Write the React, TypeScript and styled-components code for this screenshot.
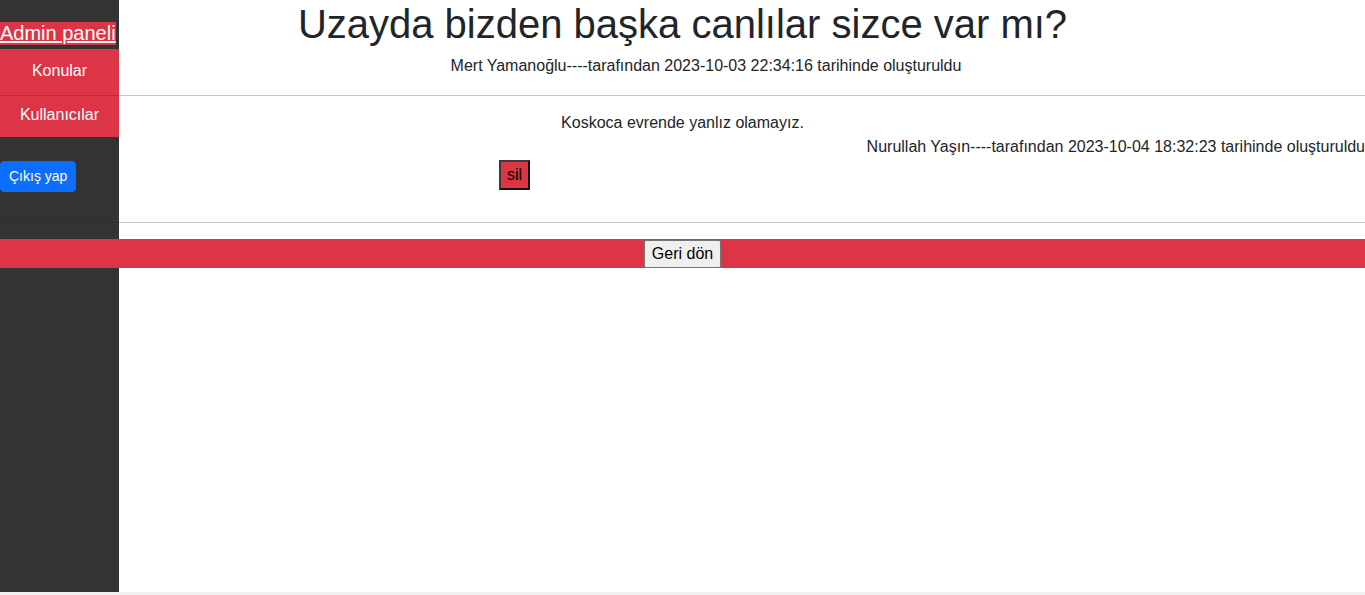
import React from 'react'
import styled, { createGlobalStyle } from 'styled-components';

const GlobalStyle = createGlobalStyle`
  html, body {
    margin: 0;
    padding: 0;
    background: #f0f0f0;
  }
  body {
    font-family: "Liberation Sans", Arial, sans-serif;
    font-size: 16px;
    line-height: 1.5;
    color: #212529;
  }
`;

const Sayfa = styled.div`
  display: grid;
  grid-template-columns: 119px 1fr;
  grid-template-rows: 1fr;
  height: 592px;
  background: #ffffff;
`;

const Kenar = styled.aside`
  grid-column: 1;
  grid-row: 1;
  background: #333333;
  display: flex;
  flex-direction: column;
  align-items: flex-start;
  padding-top: 22px;
`;

const PanelBaslik = styled.a`
  display: block;
  font-size: 20px;
  line-height: 23px;
  color: #ffffff;
  background: #dc3545;
  text-decoration: underline;
  margin-bottom: 4px;
  cursor: pointer;
`;

const Menu = styled.nav`
  display: flex;
  flex-direction: column;
  width: 100%;
`;

const MenuLink = styled.a`
  display: block;
  height: 44px;
  line-height: 44px;
  text-align: center;
  background: #dc3545;
  color: #ffffff;
  text-decoration: none;
  cursor: pointer;
`;

const CikisButon = styled.button`
  margin-top: 24px;
  font-family: inherit;
  font-size: 14px;
  line-height: 21px;
  padding: 4px 8px;
  color: #ffffff;
  background: #0d6efd;
  border: 1px solid #0d6efd;
  border-radius: 4px;
  cursor: pointer;
`;

const Icerik = styled.main`
  grid-column: 1 / -1;
  grid-row: 1;
  display: flex;
  flex-direction: column;
  align-self: start;
`;

const Baslik = styled.h1`
  margin: 0 0 6px;
  font-size: 40px;
  line-height: 48px;
  font-weight: 400;
  text-align: center;
`;

const Alt = styled.p<{ $sol?: number }>`
  margin: 0 0 17px;
  text-align: center;
  padding-left: ${(p) => p.$sol ?? 0}px;
`;

const Cizgi = styled.hr<{ $alt: number }>`
  margin: 0 0 ${(p) => p.$alt}px;
  border: 0;
  border-top: 1px solid;
  color: inherit;
  opacity: 0.25;
`;

const Yorum = styled.div`
  display: flex;
  flex-direction: column;
  margin-top: 15px;
  margin-bottom: 32px;
`;

const YorumMetin = styled.p<{ $yon: 'center' | 'right' }>`
  margin: 0;
  text-align: ${(p) => p.$yon};
`;

const SilButon = styled.button`
  align-self: flex-start;
  margin-left: 499px;
  margin-top: 1px;
  font-family: inherit;
  font-size: 16px;
  line-height: 24px;
  padding: 1px 6px;
  color: #000000;
  background: #dc3545;
  border: 2px solid #111111;
  border-top-color: #3a3a3a;
  border-left-color: #3a3a3a;
  cursor: pointer;
`;

const AltBar = styled.div`
  display: flex;
  justify-content: center;
  background: #dc3545;
  padding-top: 1px;
`;

const GeriButon = styled.button`
  font-family: inherit;
  font-size: 16px;
  line-height: 24px;
  padding: 1px 7px;
  color: #000000;
  background: #efefef;
  border: 1px solid #767676;
  border-radius: 2px;
  cursor: pointer;
`;

export default function App() {
  return (
    <>
      <GlobalStyle />
      <Sayfa>
        <Kenar>
          <PanelBaslik>Admin paneli</PanelBaslik>
          <Menu>
            <MenuLink>Konular</MenuLink>
            <MenuLink>Kullanıcılar</MenuLink>
          </Menu>
          <CikisButon>Çıkış yap</CikisButon>
        </Kenar>
        <Icerik>
          <Baslik>Uzayda bizden başka canlılar sizce var mı?</Baslik>
          <Alt $sol={47}>Mert Yamanoğlu----tarafından 2023-10-03 22:34:16 tarihinde oluşturuldu</Alt>
          <Cizgi $alt={0} />
          <Yorum>
            <YorumMetin $yon="center">Koskoca evrende yanlız olamayız.</YorumMetin>
            <YorumMetin $yon="right">Nurullah Yaşın----tarafından 2023-10-04 18:32:23 tarihinde oluşturuldu</YorumMetin>
            <SilButon>sil</SilButon>
          </Yorum>
          <Cizgi $alt={16} />
          <AltBar>
            <GeriButon>Geri dön</GeriButon>
          </AltBar>
        </Icerik>
      </Sayfa>
    </>
  )
}
